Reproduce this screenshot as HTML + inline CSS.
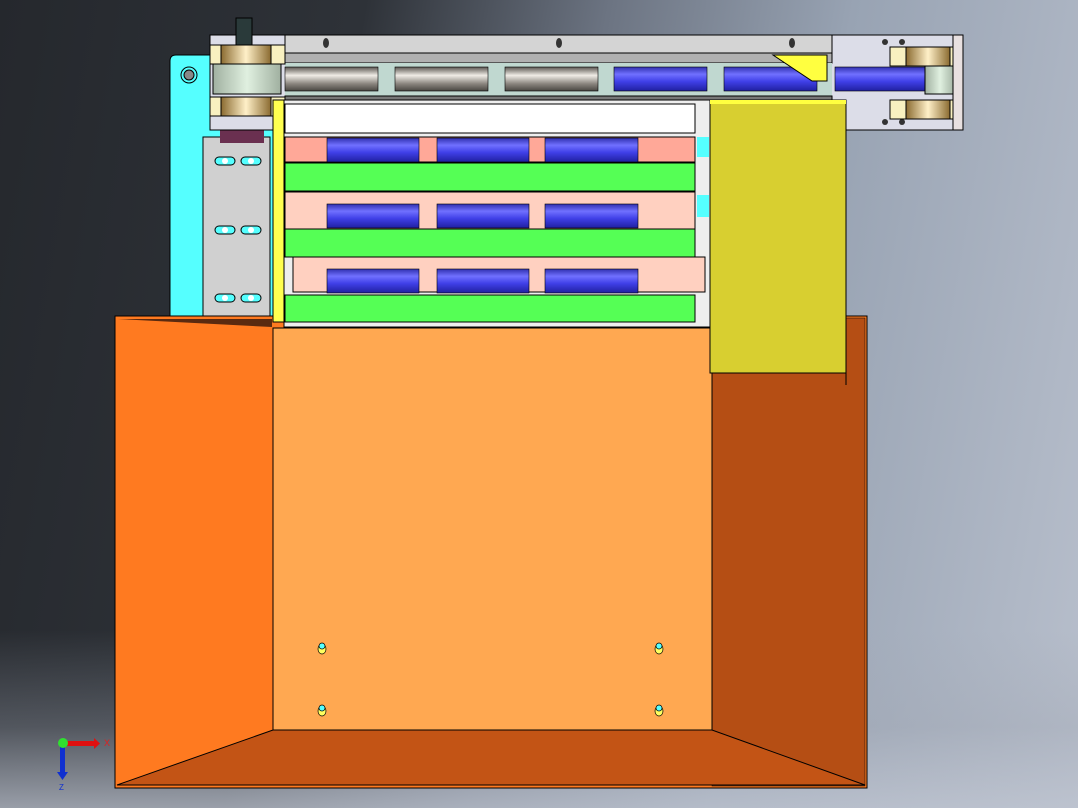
<!DOCTYPE html>
<html><head><meta charset="utf-8"><style>
html,body{margin:0;padding:0;width:1078px;height:808px;overflow:hidden}
body{background:linear-gradient(to top,rgba(190,196,208,.75) 0%,rgba(160,166,178,.35) 10%,rgba(0,0,0,0) 22%),linear-gradient(100deg,#25282d 0%,#2e3238 30%,#6c7482 50%,#98a3b3 70%,#b8bfcc 100%)}
svg{position:absolute;left:0;top:0}
</style></head><body>
<svg width="1078" height="808" viewBox="0 0 1078 808" xmlns="http://www.w3.org/2000/svg">
<defs>
<linearGradient id="bl" x1="0" y1="0" x2="0" y2="1"><stop offset="0" stop-color="#3030b0"/><stop offset=".3" stop-color="#7070ff"/><stop offset=".6" stop-color="#4040e8"/><stop offset="1" stop-color="#2020a0"/></linearGradient>
<linearGradient id="gr" x1="0" y1="0" x2="0" y2="1"><stop offset="0" stop-color="#5a5550"/><stop offset=".35" stop-color="#f0ece6"/><stop offset=".7" stop-color="#8a857e"/><stop offset="1" stop-color="#4a4742"/></linearGradient>
<linearGradient id="gd" x1="0" y1="0" x2="1" y2="0"><stop offset="0" stop-color="#8a6a30"/><stop offset=".5" stop-color="#fff0c8"/><stop offset="1" stop-color="#8a6a30"/></linearGradient>
<linearGradient id="pu" x1="0" y1="0" x2="1" y2="0"><stop offset="0" stop-color="#a0b0a0"/><stop offset=".5" stop-color="#e0f0e0"/><stop offset="1" stop-color="#a0b0a0"/></linearGradient>
</defs>
<!-- cyan plate -->
<path d="M176 55 H275 V320 H170 V61 Q170 55 176 55Z" fill="#55ffff" stroke="#000"/>
<circle cx="189" cy="75" r="8" fill="#55ffff" stroke="#000"/><circle cx="189" cy="75" r="5" fill="#888" stroke="#000"/>
<rect x="203" y="137" width="67" height="182" fill="#d0d0d0" stroke="#000"/>
<g fill="#55ffff" stroke="#000">
<rect x="215" y="157" width="20" height="8" rx="4"/><rect x="241" y="157" width="20" height="8" rx="4"/>
<rect x="215" y="226" width="20" height="8" rx="4"/><rect x="241" y="226" width="20" height="8" rx="4"/>
<rect x="215" y="294" width="20" height="8" rx="4"/><rect x="241" y="294" width="20" height="8" rx="4"/>
</g>
<g fill="#fff"><circle cx="225" cy="161" r="3"/><circle cx="251" cy="161" r="3"/><circle cx="225" cy="230" r="3"/><circle cx="251" cy="230" r="3"/><circle cx="225" cy="298" r="3"/><circle cx="251" cy="298" r="3"/></g>
<rect x="220" y="130" width="44" height="13" fill="#6a3050"/>
<!-- top rail -->
<rect x="210" y="35" width="753" height="95" fill="#dcdde8" stroke="#000"/>
<rect x="285" y="35" width="547" height="18" fill="#d4d4d4" stroke="#000"/>
<rect x="285" y="53" width="547" height="10" fill="#b0b0b0" stroke="#000"/>
<rect x="285" y="63" width="547" height="33" fill="#c0d8d0"/>
<rect x="285" y="96" width="547" height="8" fill="#777" stroke="#000"/>
<g stroke="#000" stroke-width=".6">
<rect x="285" y="67" width="93" height="24" fill="url(#gr)"/><rect x="395" y="67" width="93" height="24" fill="url(#gr)"/><rect x="505" y="67" width="93" height="24" fill="url(#gr)"/>
<rect x="614" y="67" width="93" height="24" fill="url(#bl)"/><rect x="724" y="67" width="93" height="24" fill="url(#bl)"/><rect x="835" y="67" width="92" height="24" fill="url(#bl)"/>
</g>
<path d="M773 55 L827 55 L827 81 L812 81Z" fill="#ffff40" stroke="#000"/>
<g fill="#333"><ellipse cx="326" cy="43" rx="3" ry="5"/><ellipse cx="559" cy="43" rx="3" ry="5"/><ellipse cx="792" cy="43" rx="3" ry="5"/>
<circle cx="885" cy="42" r="3"/><circle cx="902" cy="42" r="3"/><circle cx="885" cy="122" r="3"/><circle cx="902" cy="122" r="3"/></g>
<rect x="213" y="64" width="68" height="30" fill="url(#pu)" stroke="#000"/>
<rect x="925" y="66" width="30" height="28" fill="url(#pu)" stroke="#000"/>
<g stroke="#000"><rect x="210" y="45" width="75" height="19" fill="#f8f0c0"/><rect x="221" y="45" width="50" height="19" fill="url(#gd)"/>
<rect x="210" y="97" width="75" height="19" fill="#f8f0c0"/><rect x="221" y="97" width="50" height="19" fill="url(#gd)"/>
<rect x="890" y="47" width="68" height="19" fill="#f8f0c0"/><rect x="906" y="47" width="44" height="19" fill="url(#gd)"/>
<rect x="890" y="100" width="68" height="19" fill="#f8f0c0"/><rect x="906" y="100" width="44" height="19" fill="url(#gd)"/>
<rect x="236" y="18" width="16" height="27" fill="#2a3a3a"/></g>
<rect x="953" y="35" width="10" height="95" fill="#e8e0e0" stroke="#000"/>
<!-- box -->
<rect x="115" y="316" width="752" height="472" fill="#ff7a20" stroke="#000"/>
<rect x="712" y="318" width="153" height="468" fill="#b54e14" stroke="#000" stroke-width=".5"/>
<path d="M117 785 L273 730 L712 730 L865 785Z" fill="#c35415" stroke="#000"/>
<rect x="273" y="328" width="439" height="402" fill="#ffa851" stroke="#000"/>
<path d="M118 319 L272 319 L272 327 Z" fill="#5a2a10"/>
<!-- rows -->
<rect x="284" y="100" width="428" height="227" fill="#eee" stroke="#000"/>
<rect x="273" y="100" width="11" height="222" fill="#ffff50" stroke="#000"/>
<rect x="285" y="104" width="410" height="29" fill="#fff" stroke="#000"/>
<g stroke="#000">
<rect x="285" y="137" width="410" height="25" fill="#ffa898"/>
<rect x="285" y="163" width="410" height="28" fill="#55ff55"/>
<rect x="285" y="192" width="410" height="37" fill="#ffd0c0"/>
<rect x="285" y="229" width="410" height="28" fill="#55ff55"/>
<rect x="293" y="257" width="412" height="35" fill="#ffd0c0"/>
<rect x="285" y="295" width="410" height="27" fill="#55ff55"/>
</g>
<g stroke="#000" stroke-width=".6" fill="url(#bl)">
<rect x="327" y="138" width="92" height="24"/><rect x="437" y="138" width="92" height="24"/><rect x="545" y="138" width="93" height="24"/>
<rect x="327" y="204" width="92" height="24"/><rect x="437" y="204" width="92" height="24"/><rect x="545" y="204" width="93" height="24"/>
<rect x="327" y="269" width="92" height="24"/><rect x="437" y="269" width="92" height="24"/><rect x="545" y="269" width="93" height="24"/>
</g>
<rect x="697" y="137" width="12" height="20" fill="#55ffff"/><rect x="697" y="195" width="12" height="22" fill="#55ffff"/>
<rect x="710" y="100" width="136" height="273" fill="#d8cf30" stroke="#000"/>
<rect x="710" y="100" width="136" height="4" fill="#ffff40"/>
<line x1="846" y1="320" x2="846" y2="385" stroke="#000"/>
<g stroke="#000" stroke-width=".7"><ellipse cx="322" cy="649" rx="4" ry="5" fill="#ffff60"/><ellipse cx="659" cy="649" rx="4" ry="5" fill="#ffff60"/><ellipse cx="322" cy="711" rx="4" ry="5" fill="#ffff60"/><ellipse cx="659" cy="711" rx="4" ry="5" fill="#ffff60"/>
<circle cx="322" cy="646" r="3" fill="#55ffff"/><circle cx="659" cy="646" r="3" fill="#55ffff"/><circle cx="322" cy="708" r="3" fill="#55ffff"/><circle cx="659" cy="708" r="3" fill="#55ffff"/></g>
<!-- triad -->
<rect x="64" y="741" width="30" height="5" fill="#e01010"/><path d="M94 738 L100 743.5 L94 749Z" fill="#e01010"/>
<rect x="60" y="743" width="5" height="30" fill="#1030d0"/><path d="M57 772 L62.5 780 L68 772Z" fill="#1030d0"/>
<circle cx="63" cy="743" r="5" fill="#30e030"/>
<text x="104" y="746" font-family="Liberation Sans,sans-serif" font-size="9" fill="#e02020">X</text>
<text x="59" y="790" font-family="Liberation Sans,sans-serif" font-size="8" fill="#1030d0">Z</text>
</svg>
</body></html>
